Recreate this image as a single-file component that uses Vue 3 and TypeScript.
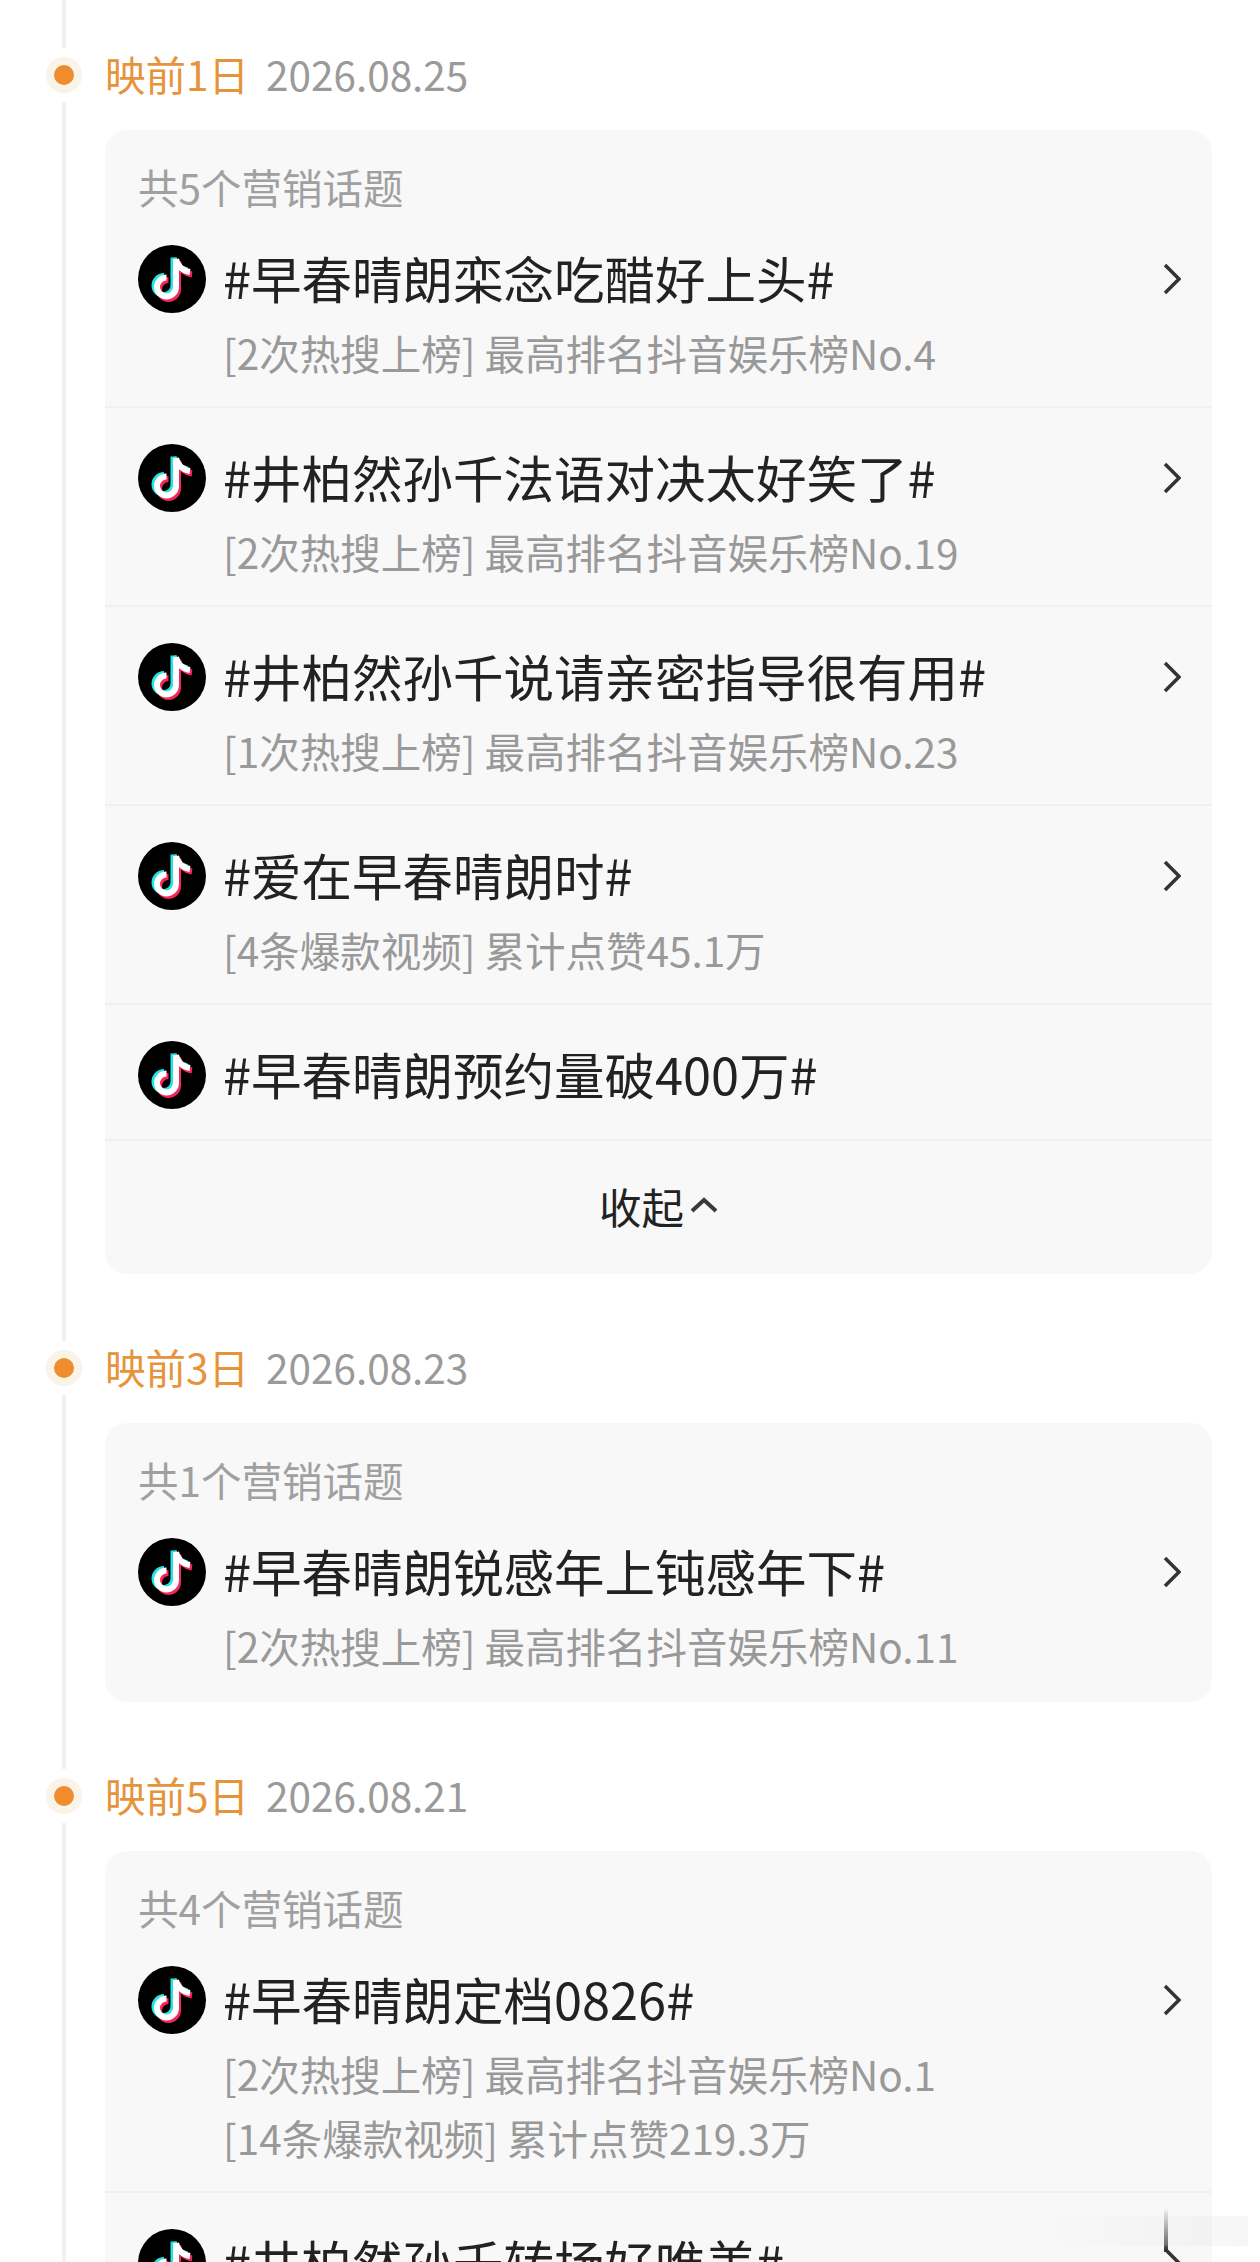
<script setup lang="ts">
interface Topic {
  title: string;
  lines: string[];
  arrow: boolean;
}

interface Day {
  label: string;
  date: string;
  count: number;
  topics: Topic[];
  collapsible: boolean;
}

const days: Day[] = [
  {
    label: "映前1日",
    date: "2026.08.25",
    count: 5,
    collapsible: true,
    topics: [
      { title: "#早春晴朗栾念吃醋好上头#", lines: ["[2次热搜上榜] 最高排名抖音娱乐榜No.4"], arrow: true },
      { title: "#井柏然孙千法语对决太好笑了#", lines: ["[2次热搜上榜] 最高排名抖音娱乐榜No.19"], arrow: true },
      { title: "#井柏然孙千说请亲密指导很有用#", lines: ["[1次热搜上榜] 最高排名抖音娱乐榜No.23"], arrow: true },
      { title: "#爱在早春晴朗时#", lines: ["[4条爆款视频] 累计点赞45.1万"], arrow: true },
      { title: "#早春晴朗预约量破400万#", lines: [], arrow: false },
    ],
  },
  {
    label: "映前3日",
    date: "2026.08.23",
    count: 1,
    collapsible: false,
    topics: [
      { title: "#早春晴朗锐感年上钝感年下#", lines: ["[2次热搜上榜] 最高排名抖音娱乐榜No.11"], arrow: true },
    ],
  },
  {
    label: "映前5日",
    date: "2026.08.21",
    count: 4,
    collapsible: false,
    topics: [
      {
        title: "#早春晴朗定档0826#",
        lines: ["[2次热搜上榜] 最高排名抖音娱乐榜No.1", "[14条爆款视频] 累计点赞219.3万"],
        arrow: true,
      },
      { title: "#井柏然孙千转场好唯美#", lines: [], arrow: true },
    ],
  },
];

const notePath = "M38 14V42A9.5 9.5 0 1 1 28.5 32.5M38 14C39 21 45 26 52 27";
const noteLayers = [
  { color: "#25e4e6", dx: -2.5, dy: -1.5 },
  { color: "#f5265a", dx: 2, dy: 2.5 },
  { color: "#ffffff", dx: 0, dy: 0 },
];
</script>

<template>
  <div class="page">
    <div class="rail"></div>
    <section v-for="day in days" :key="day.date" class="day">
      <div class="day-head">
        <span class="dot"><i></i></span>
        <span class="day-label">{{ day.label }}</span>
        <span class="day-date">{{ day.date }}</span>
      </div>
      <div class="card">
        <div class="card-count">共{{ day.count }}个营销话题</div>
        <div
          v-for="topic in day.topics"
          :key="topic.title"
          class="topic"
          :class="{ 'topic-plain': !topic.lines.length }"
        >
          <div class="topic-main">
            <svg class="logo" viewBox="0 0 68 68" width="68" height="68">
              <circle cx="34" cy="34" r="34" fill="#000" />
              <path
                v-for="layer in noteLayers"
                :key="layer.color"
                :d="notePath"
                :stroke="layer.color"
                :transform="`translate(${layer.dx} ${layer.dy})`"
                fill="none"
                stroke-width="6"
              />
            </svg>
            <span class="topic-title">{{ topic.title }}</span>
            <svg
              v-if="topic.arrow"
              class="arrow"
              viewBox="0 0 18 32"
              width="18"
              height="32"
              fill="none"
              stroke="#333"
              stroke-width="3.5"
            >
              <path d="M2 2L16 16L2 30" />
            </svg>
          </div>
          <div v-if="topic.lines.length" class="topic-lines">
            <div v-for="line in topic.lines" :key="line">{{ line }}</div>
          </div>
        </div>
        <div v-if="day.collapsible" class="collapse">
          <span>收起</span>
          <svg viewBox="0 0 28 16" width="28" height="16" fill="none" stroke="#3a3a3a" stroke-width="4">
            <path d="M2 14L14 3L26 14" />
          </svg>
        </div>
      </div>
    </section>
    <div class="mark">
      <i class="mark-bar"></i>
      <i class="mark-band"></i>
    </div>
  </div>
</template>

<style scoped>
.page {
  position: relative;
  height: 2262px;
  padding: 54px 48px 0 105px;
  box-sizing: border-box;
  overflow: hidden;
  background: #fff;
  font-family: "Noto Sans CJK SC", "Noto Sans", sans-serif;
}

.rail {
  position: absolute;
  left: 62px;
  top: 0;
  bottom: 0;
  width: 4px;
  background: #f1f1f1;
}

.day {
  margin-bottom: 73px;
}

.day-head {
  position: relative;
  display: flex;
  align-items: center;
  gap: 17px;
  height: 40px;
  margin-bottom: 36px;
  font-size: 40.5px;
  line-height: 40px;
}

.dot {
  position: absolute;
  left: -59px;
  top: 3px;
  width: 36px;
  height: 36px;
  display: flex;
  align-items: center;
  justify-content: center;
  border-radius: 50%;
  background: #f9f3e8;
  box-shadow: 0 0 0 9px #fff;
}

.dot i {
  width: 20px;
  height: 20px;
  border-radius: 50%;
  background: #f08c2e;
}

.day-label {
  color: #e6943b;
}

.day-date {
  color: #9a9a9a;
}

.card {
  background: #f8f8f8;
  border-radius: 22px;
}

.card-count {
  padding: 37px 33px 2px;
  font-size: 40.5px;
  line-height: 40px;
  color: #a0a0a0;
}

.topic {
  padding: 36px 20px 21px 33px;
  border-bottom: 2px solid #f0f0f0;
}

.topic-plain {
  padding-bottom: 30px;
}

.topic:last-child {
  padding-bottom: 24px;
  border-bottom: none;
}

.topic-main {
  display: flex;
  align-items: center;
  height: 68px;
}

.logo {
  flex: none;
  margin-right: 17px;
}

.topic-title {
  padding-bottom: 4px;
  font-size: 50.5px;
  line-height: 64px;
  color: #222;
}

.arrow {
  margin-left: auto;
  margin-right: 11px;
}

.topic-lines {
  margin: 8px 0 0 85px;
  font-size: 40.5px;
  line-height: 64px;
  color: #999;
}

.collapse {
  height: 133px;
  padding-bottom: 5px;
  box-sizing: border-box;
  display: flex;
  align-items: center;
  justify-content: center;
  gap: 6px;
  font-size: 42.5px;
  color: #222;
}

.mark {
  position: absolute;
  left: 1035px;
  top: 2208px;
  width: 213px;
  height: 44px;
  pointer-events: none;
}

.mark-bar {
  position: absolute;
  left: 129px;
  top: 0;
  width: 4px;
  height: 44px;
  background: linear-gradient(to bottom, rgba(40, 40, 40, 0), #333);
}

.mark-band {
  position: absolute;
  left: 0;
  right: 0;
  top: 8px;
  bottom: 6px;
  background: linear-gradient(to right, rgba(225, 225, 225, 0), rgba(225, 225, 225, 0.3));
}
</style>

<style>
html,
body {
  margin: 0;
  overflow: hidden;
}
</style>
